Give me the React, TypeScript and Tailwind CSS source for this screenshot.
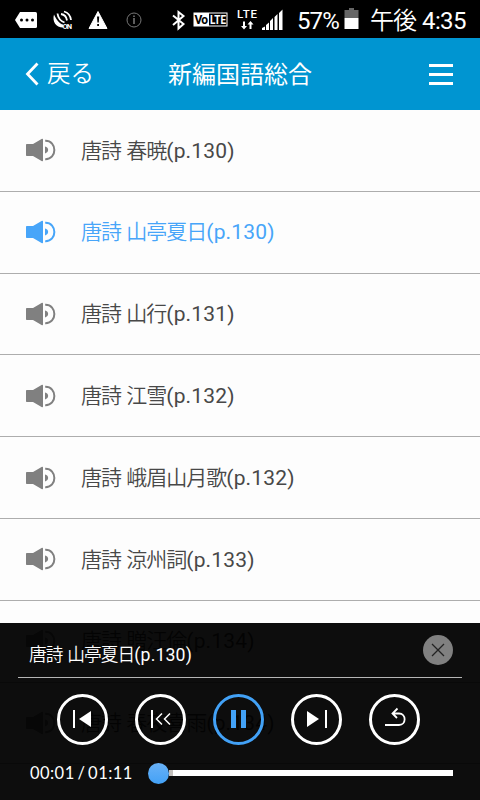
import { useState } from 'react'
import type { ReactNode } from 'react'

const tracks = [
  { title: '唐詩 春暁', page: '(p.130)' },
  { title: '唐詩 山亭夏日', page: '(p.130)' },
  { title: '唐詩 山行', page: '(p.131)' },
  { title: '唐詩 江雪', page: '(p.132)' },
  { title: '唐詩 峨眉山月歌', page: '(p.132)' },
  { title: '唐詩 涼州詞', page: '(p.133)' },
  { title: '唐詩 贈汪倫', page: '(p.134)' },
  { title: '唐詩 春夜喜雨', page: '(p.134)' },
]

const SpeakerIcon = () => (
  <svg width="30" height="24" viewBox="0 0 30 24" fill="currentColor" className="shrink-0">
    <path d="M1 6h6L16 .8c.6-.3 1 0 1 .6v21.2c0 .6-.4.9-1 .6L7 18H1c-.6 0-1-.4-1-1V7c0-.6.4-1 1-1z" />
    <path d="M19 8.6c4.2.6 4.2 6.200 0 6.800z" />
    <path d="M19.200 2.800c12.200-.4 12.200 18.800 0 18.400" fill="none" stroke="currentColor" strokeWidth="2" />
  </svg>
)

const StatusBar = () => (
  <div className="flex h-[38px] shrink-0 items-center bg-black text-white">
    <svg width="160" height="38" viewBox="0 0 160 38">
      <path d="M20 12h15.500q1.500 0 1.500 1.500v13q0 1.500-1.500 1.500H20l-5-8z" fill="#fff" />
      <g fill="#000">
        <circle cx="21.500" cy="20" r="1.500" />
        <circle cx="27" cy="20" r="1.500" />
        <circle cx="32.500" cy="20" r="1.500" />
      </g>
      <path d="M54 14.500c-2 7 2 13 9 13v-3c-3-.5-7-5-9-10z" fill="#fff" />
      <g fill="none" stroke="#fff">
        <path d="M57.500 13.500c.5 4 3 7.500 7 9" strokeWidth="1.800" />
        <path d="M61 14c3 .5 5.500 3 6 6.500M64 11.500c3.500 1 6.500 4.500 7 8.500" strokeWidth="1.800" />
      </g>
      <text x="62.500" y="28.500" fill="#fff" fontSize="7.500" fontWeight="700" textLength="9.500" className="font-['Roboto',sans-serif]">ON</text>
      <path d="M98 11.500l9 17H89z" fill="#fff" stroke="#fff" strokeLinejoin="round" />
      <path d="M97 16.500h2.200l-.4 6h-1.400zM97.200 24h1.800v2h-1.800z" fill="#000" />
      <circle cx="134" cy="20" r="7" fill="none" stroke="#777" />
      <path d="M134 18v6M134 15.500v1.500" stroke="#999" strokeWidth="1.200" />
    </svg>
    <svg width="125" height="38" viewBox="160 0 125 38">
      <path d="M173 15.500l10.500 8.500-5 4.500V12l5 4-10.500 9" fill="none" stroke="#fff" strokeWidth="2" />
      <rect x="193.500" y="12.500" width="34" height="14" fill="#fff" />
      <rect x="209" y="13.500" width="17.500" height="12" fill="#000" />
      <g fontSize="12" fontWeight="700" className="font-['Roboto',sans-serif]">
        <text x="194.500" y="24" textLength="13.500" fill="#000">Vo</text>
        <text x="210" y="24" textLength="16" lengthAdjust="spacingAndGlyphs" fill="#fff">LTE</text>
        <text x="237" y="17.500" textLength="20" fontSize="11.500" fontWeight="500" fill="#fff">LTE</text>
      </g>
      <path d="M243 21.500h2v4.500h2l-3 3.500-3-3.500h2zM249.500 29v-4.500h-2l3-3.500 3 3.500h-2v4.500z" fill="#fff" />
      <path d="M262 30v-2l3-1.500v3.500zM266 30v-5l3-2.500v7.500zM270 30v-9l3-3v12zM274.500 30v-13l3-3v16zM279 30v-17l3.500-3.500v20.500z" fill="#fff" />
    </svg>
    <div className="ml-3 mt-[3px] w-[45px] whitespace-nowrap font-['Roboto',sans-serif] text-[24px] leading-none tracking-[-0.9px]">
      57%
    </div>
    <svg width="15" height="22" viewBox="0 0 15 22" className="ml-[2px]">
      <path d="M5 0h5v2h4.500v8H.5V2H5z" fill="#666" />
      <path d="M.5 10h14v11H.500z" fill="#fff" />
    </svg>
    <div className="ml-[11px] mt-[3px] whitespace-nowrap font-['Roboto','Noto_Sans_CJK_JP',sans-serif] text-[24px] leading-none">
      <span className="font-[350] tracking-[-1px]">午後</span>
      <span className="ml-[6px] tracking-[-0.6px]">4:35</span>
    </div>
  </div>
)

const Header = () => (
  <header className="flex h-[72px] shrink-0 items-center bg-[#0095d1] pl-[25px] pr-[27px] text-[24px] text-white">
    <button type="button" className="flex w-[143px] items-center gap-[8px] text-[23.500px] font-[350]">
      <svg width="14" height="24" viewBox="0 0 14 24" fill="none" stroke="currentColor" strokeWidth="2.800">
        <path d="M12.500 1.500L2.500 12l10 10.500" />
      </svg>
      <span className="pt-0.5">戻る</span>
    </button>
    <h1 className="flex-1 whitespace-nowrap pt-0.5">新編国語総合</h1>
    <button type="button" className="flex flex-col gap-[6px]">
      <span className="h-[3px] w-6 bg-white" />
      <span className="h-[3px] w-6 bg-white" />
      <span className="h-[3px] w-6 bg-white" />
    </button>
  </header>
)

interface RoundButtonProps {
  children: ReactNode
  active?: boolean
  onClick?: () => void
}

const RoundButton = ({ children, active, onClick }: RoundButtonProps) => (
  <button
    type="button"
    onClick={onClick}
    className={`h-[51px] w-[51px] rounded-full border-[3px] ${
      active ? 'border-[#42a1f6] text-[#42a1f6]' : 'border-white text-white'
    }`}
  >
    <svg width="45" height="45" viewBox="0 0 45 45" fill="currentColor">
      {children}
    </svg>
  </button>
)

export default function App() {
  const [current, setCurrent] = useState(1)
  const [playing, setPlaying] = useState(true)
  const track = tracks[current]
  const step = (n: number) => setCurrent((current + n + tracks.length) % tracks.length)

  return (
    <div className="relative flex h-[800px] w-[480px] flex-col overflow-hidden bg-[#fdfdfd] font-['Roboto','Noto_Sans_CJK_JP',sans-serif]">
      <StatusBar />
      <Header />
      <ul>
        {tracks.map((t, i) => (
          <li
            key={t.title}
            onClick={() => setCurrent(i)}
            className={`flex h-[81.8px] items-center gap-[25px] border-b border-[#adadad] pl-[26px] ${
              i === current ? 'text-[#47a5f9]' : 'text-[#808080]'
            }`}
          >
            <SpeakerIcon />
            <span className={`whitespace-nowrap pt-0.5 text-[21px] ${i === current ? '' : 'text-[#484848]'}`}>
              <span className="font-[350] tracking-[-1px] [word-spacing:1.2px]">{t.title}</span>
              <span className="tracking-[0.15px]">{t.page}</span>
            </span>
          </li>
        ))}
      </ul>

      <div className="absolute inset-x-0 bottom-0 flex h-[177px] flex-col bg-black/95 text-white">
        <div className="mx-[18px] flex h-[55px] items-center justify-between border-b border-[#b5b5b5] pl-[11px] pr-[9px]">
          <p className="mt-[10px] whitespace-nowrap text-[17.700px]">
            <span className="font-[350] tracking-[-0.9px] [word-spacing:1.2px]">{track.title}</span>
            <span className="tracking-[0.15px]">{track.page}</span>
          </p>
          <button type="button" className="h-[30px] w-[30px] rounded-full bg-[#808080]">
            <svg width="30" height="30" viewBox="0 0 30 30" stroke="#222" strokeWidth="1.300">
              <path d="M9 9l12 12M21 9L9 21" />
            </svg>
          </button>
        </div>
        <div className="mt-[16px] flex gap-[27px] pl-[57px]">
          <RoundButton onClick={() => step(-1)}>
            <path d="M13 13h2v18h-2zM31 14v16l-12-8z" />
          </RoundButton>
          <RoundButton>
            <path d="M13 13h2v18h-2z" />
            <path d="M24 16.500L18.500 22l5.500 5.500M32 16.500L26.500 22l5.500 5.500" fill="none" stroke="currentColor" strokeWidth="1.500" />
          </RoundButton>
          <RoundButton active onClick={() => setPlaying(!playing)}>
            {playing ? <path d="M15 13h5v18h-5zM25 13h5v18h-5z" /> : <path d="M16 12v20l16-10z" />}
          </RoundButton>
          <RoundButton onClick={() => step(1)}>
            <path d="M13 14v16l12-8zM31 13h2v18h-2z" />
          </RoundButton>
          <RoundButton>
            <path d="M13 28h14c7.500 0 7.500-11.500 0-11.500h-6M25.500 11.500l-5 5 4.500 4.500" fill="none" stroke="currentColor" strokeWidth="1.800" />
          </RoundButton>
        </div>
        <div className="mt-[17px] flex h-[22px] items-center pl-[30px] font-['Lato',sans-serif] text-[16.500px]">
          <span className="w-[118px] whitespace-nowrap tracking-[0.45px] [word-spacing:-1.9px]">00:01 / 01:11</span>
          <span className="h-[21px] w-[21px] rounded-full bg-linear-to-b from-[#68b1f7] to-[#42a1f6]" />
          <span className="h-[6px] w-[4px] bg-[#c3c0bd]" />
          <span className="h-[6px] w-[280px] bg-white" />
        </div>
      </div>
    </div>
  )
}
